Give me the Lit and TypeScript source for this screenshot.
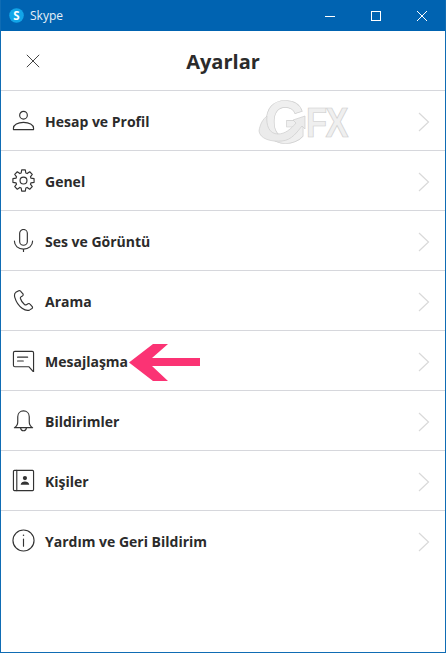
import { LitElement, html, css, svg } from "lit";
import { customElement } from "lit/decorators.js";

const gearPath = (() => {
  const pts: string[] = [];
  const n = 8;
  for (let k = 0; k < n; k++) {
    const a = (k * 2 * Math.PI) / n - Math.PI / 2;
    const p = (r: number, d: number) =>
      `${(12 + r * Math.cos(a + d)).toFixed(2)} ${(12 + r * Math.sin(a + d)).toFixed(2)}`;
    pts.push(
      `${k === 0 ? "M" : "L"}${p(8.2, -0.3)}`,
      `L${p(11.2, -0.17)}`,
      `L${p(11.2, 0.17)}`,
      `L${p(8.2, 0.3)}`
    );
  }
  return pts.join(" ") + "Z";
})();

const S = (body: unknown, size = 24) => html`<svg class="ico" width=${size} height=${size} viewBox="0 0 24 24" fill="none" stroke="#333" stroke-width="1.2" stroke-linecap="round" stroke-linejoin="round">${body}</svg>`;

const rows = [
  { t: "Hesap ve Profil", i: svg`<circle cx="12" cy="6.500" r="4"/><path d="M1.500 21.500h21v-1.500c0-3.500-4.500-6-10.500-6s-10.500 2.500-10.500 6z"/>` },
  { t: "Genel", i: svg`<circle cx="12" cy="12" r="3.600"/><path d=${gearPath}/>` },
  { t: "Ses ve Görüntü", i: svg`<rect x="8" y="0.500" width="8" height="16.500" rx="4"/><path d="M2.500 12.500c0 5 4 8.500 9.500 8.500s9.500-3.500 9.500-8.500M12 21v3"/>` },
  { t: "Arama", i: svg`<path d="M6.500 2 4 3.500C2.500 4.500 2.300 6.500 3 9c1.200 4 4 8.500 7.500 11 2.800 2 6 2.800 8 1.800l2.300-1.500c.7-.5.8-1.300.3-2l-2.300-2.600c-.5-.6-1.300-.7-2-.3l-1.800 1c-.7.400-1.300.3-2-.2-1.800-1.500-3.500-4-4.200-6.300-.2-.8 0-1.400.7-1.800l1.400-.9c.7-.5.9-1.200.6-2L9.500 3c-.4-1-1.900-1.600-3-1z"/>` },
  { t: "Mesajlaşma", i: svg`<path d="M3 2.500h18c1 0 1.500.5 1.500 1.500v20l-5-5.500H3c-1 0-1.500-.5-1.500-1.500V4c0-1 .5-1.500 1.500-1.500z"/><path d="M5.800 8.500h10.500M5.800 12.500h6"/>` },
  { t: "Bildirimler", i: svg`<path d="M2.500 19.500c2.500-1.500 3.500-3 3.500-6V8c0-3.500 2.500-6 6-6s6 2.500 6 6v5.500c0 3 1 4.500 3.500 6z"/><path d="M9 20c.2 1.700 1.300 2.700 3 2.700s2.800-1 3-2.700"/>` },
  { t: "Kişiler", i: svg`<rect x="1.500" y="1.500" width="21" height="21" rx="1"/><path d="M5 1.500v21"/><circle cx="13.500" cy="9.500" r="2.200" fill="#333" stroke="none"/><path d="M9 16.500c.3-2.500 2.200-3.500 4.500-3.500s4.200 1 4.500 3.500z" fill="#333" stroke="none"/>` },
  { t: "Yardım ve Geri Bildirim", i: svg`<circle cx="12" cy="12" r="11"/><path d="M12 10.500v7.500"/><circle cx="12" cy="6.500" r=".8" fill="#333" stroke="none"/>` },
];

@customElement("app-root")
export class AppRoot extends LitElement {
  static styles = css`
    :host { display: block; }
    .win {
      position: relative; box-sizing: border-box; width: 446px; height: 653px;
      background: #fff; border: solid #0f6cb4; border-width: 0 1px 1px 1px;
      font-family: "Open Sans", "Noto Sans", sans-serif; color: #2b2b2b; overflow: hidden;
      display: flex; flex-direction: column;
    }
    .bar {
      height: 31px; flex: none; background: #0063b1; color: #e6f0f8;
      display: flex; align-items: center; padding-left: 9px; font-size: 12px; gap: 6px;
      margin: 0 -1px;
    }
    .bar .name { flex: 1; }
    .logo { display: block; }
    .ctl { display: flex; align-items: center; margin-right: 1px; }
    .ctl span { width: 46px; height: 31px; display: flex; align-items: center; justify-content: center; }
    .head {
      height: 59px; flex: none; position: relative; display: flex; align-items: center; justify-content: center;
      border-bottom: 1px solid #d6d7dc;
    }
    .close { position: absolute; left: 25px; top: 23px; display: block; }
    h1 { margin: 2px 0 0; font-size: 20px; font-weight: 700; color: #2b2b2b; }
    .row {
      height: 59px; flex: none; display: flex; align-items: center; border-bottom: 1px solid #d6d7dc;
      padding-left: 11px; padding-right: 15px; font-size: 14px; font-weight: 700;
    }
    .row.last { border-bottom-color: transparent; }
    .row .ico { flex: none; margin-right: 10px; }
    .row .t { flex: 1; padding-top: 2px; }
    .chev { display: block; margin-top: 2px; }
    .arrow { position: absolute; left: -1px; top: 0; pointer-events: none; }
    .mark { position: absolute; left: 255px; top: 97px; width: 100px; height: 50px; pointer-events: none; }
    .mark .g, .mark .fx {
      position: absolute; font-family: "Liberation Sans", sans-serif; font-weight: 700; color: #efefef;
      -webkit-text-stroke: 0.7px #cdcdcd; line-height: 1; transform-origin: left top;
    }
    .mark .g { left: 8px; top: -6px; font-size: 62px; transform: scaleX(.88); }
    .mark .fx { left: 50px; top: 5px; font-size: 42px; letter-spacing: -2px; transform: scaleX(.82); }
    .mark svg { position: absolute; left: 0; top: 0; }
  `;

  render() {
    return html`<div class="win">
      <div class="bar">
        <svg class="logo" width="15" height="15" viewBox="0 0 15 15">
          <circle cx="7.500" cy="7.500" r="7.300" fill="#12a5e8"/>
          <text x="7.500" y="11.600" text-anchor="middle" font-family="Open Sans" font-weight="700" font-size="11.500" fill="#fff">S</text>
        </svg>
        <span class="name">Skype</span>
        <div class="ctl">
          <span><svg width="10" height="10" viewBox="0 0 10 10"><path d="M0 5.500h10" stroke="#fff"/></svg></span>
          <span><svg width="10" height="10" viewBox="0 0 10 10"><rect x=".5" y=".5" width="9" height="9" fill="none" stroke="#fff"/></svg></span>
          <span><svg width="10" height="10" viewBox="0 0 10 10"><path d="M0 0l10 10M10 0L0 10" stroke="#fff" stroke-width="1"/></svg></span>
        </div>
      </div>
      <div class="head">
        <svg class="close" width="14" height="14" viewBox="0 0 14 14"><path d="M.8.8l12.400 12.400M13.200.8L.8 13.200" stroke="#444" stroke-width="1"/></svg>
        <h1>Ayarlar</h1>
      </div>
      ${rows.map((r, n) => html`<div class="row ${n === rows.length - 1 ? "last" : ""}">
        ${S(r.i, 23)}
        <span class="t">${r.t}</span>
        <svg class="chev" width="12" height="20" viewBox="0 0 12 20"><path d="M1 1l9.500 9L1 19" fill="none" stroke="#d9d9d9" stroke-width="1.200"/></svg>
      </div>`)}
      <div class="mark">
        <span class="g">G</span>
        <span class="fx">FX</span>
        <svg width="100" height="50" viewBox="0 0 100 50">
          <path d="M3 34c1-7 4-12 8-15-1 9 2 18 11 18 7 0 13-5 18-11l-3-3 12-4v13l-3-3c-5 6-10 14-20 15-11 1-22-2-23-10z" fill="#ebebeb" stroke="#cdcdcd" stroke-width=".7"/>
        </svg>
      </div>
      <svg class="arrow" width="446" height="653" viewBox="0 0 446 653">
        <path d="M129 362.500 153 344h15l-16 14h48v8h-48l16 15h-15z" fill="#fb3374"/>
      </svg>
    </div>`;
  }
}
